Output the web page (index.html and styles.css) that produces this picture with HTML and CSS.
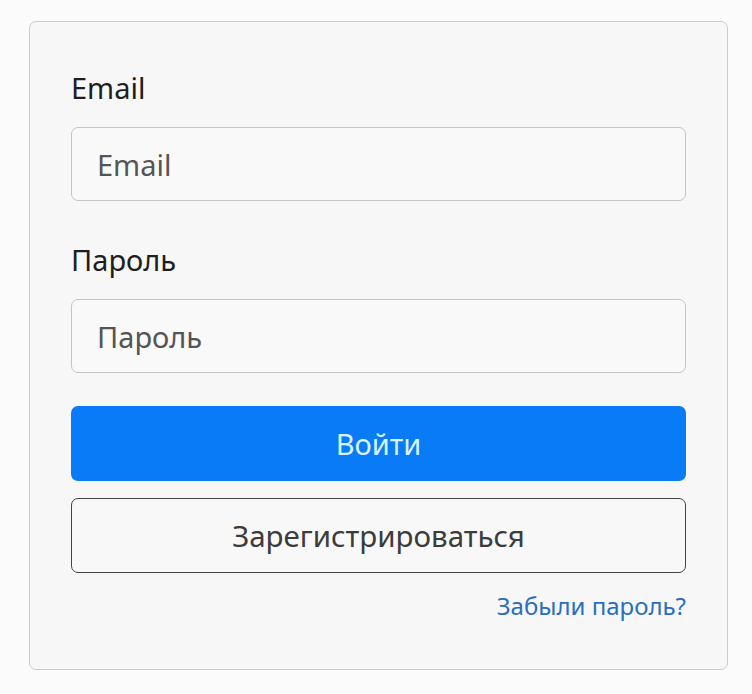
FILE: index.html
```html
<!DOCTYPE html>
<html lang="ru">
<head>
<meta charset="utf-8">
<title>Вход</title>
<link rel="stylesheet" href="styles.css">
</head>
<body>
<div class="page">
  <form class="card">
    <div class="group">
      <label class="label" for="email">Email</label>
      <input class="input" id="email" type="text" placeholder="Email">
    </div>
    <div class="group group-last">
      <label class="label" for="pass">Пароль</label>
      <input class="input" id="pass" type="password" placeholder="Пароль">
    </div>
    <button class="btn btn-primary" type="button">Войти</button>
    <button class="btn btn-outline" type="button">Зарегистрироваться</button>
    <div class="links"><a class="link" href="#">Забыли пароль?</a></div>
  </form>
</div>
</body>
</html>
```
FILE: styles.css
```css
* { box-sizing: border-box; }
html, body { margin: 0; padding: 0; background: #fbfbfb; }
body { font-family: "Noto Sans", "Open Sans", sans-serif; color: #222; }
.page { padding: 21px 25px 25px 29px; }
.card {
  width: 699px;
  height: 649px;
  background: #f7f7f7;
  border: 1.5px solid #cbcbcb;
  border-radius: 7px;
  padding: 43px 41px 0 41px;
  display: flex;
  flex-direction: column;
}
.group { display: flex; flex-direction: column; margin-bottom: 36px; }
.group-last { margin-bottom: 33px; }
.label { font-size: 29px; line-height: 46px; margin-bottom: 16px; color: #1e1e1e; }
.input {
  height: 74px;
  border: 1.5px solid #c4c4c4;
  border-radius: 7px;
  background: #f9f9f9;
  padding: 0 25px;
  font-family: inherit;
  font-size: 29px;
  color: #333;
  outline: none;
}
.input::placeholder { color: #555; }
.btn {
  height: 75px;
  border-radius: 7px;
  font-family: inherit;
  font-size: 29px;
  cursor: pointer;
}
.btn-primary { background: #0a7bf6; border: none; color: #d8f3ff; margin-bottom: 17px; }
.btn-outline { background: #f8f8f8; border: 1.5px solid #444; color: #3c3c3c; font-size: 29.5px; }
.links { display: flex; justify-content: flex-end; margin-top: 16px; }
.link { color: #2a6fbd; text-decoration: none; font-size: 24px; line-height: 34px; }
```
